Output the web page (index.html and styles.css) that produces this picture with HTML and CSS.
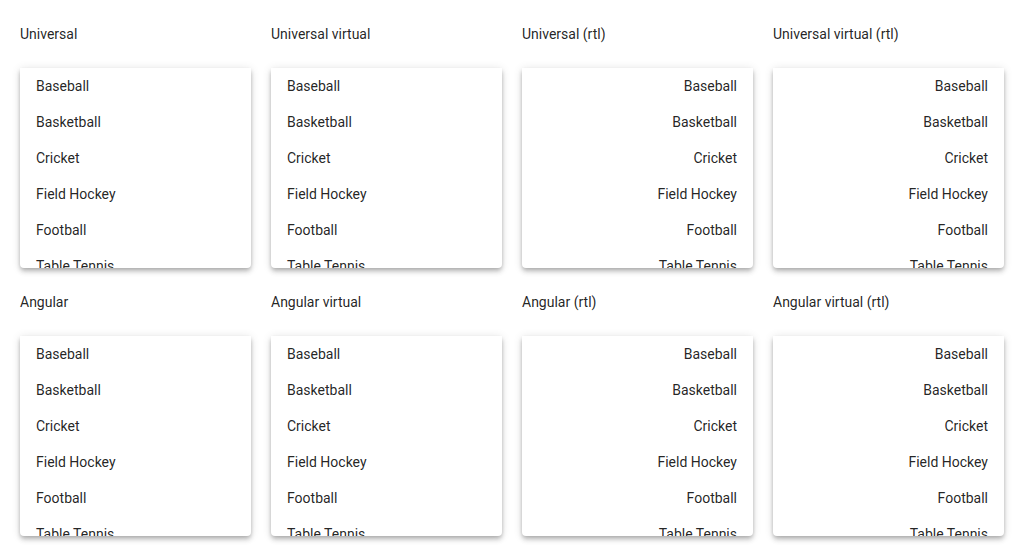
FILE: index.html
```html
<!DOCTYPE html>
<html lang="en">
<head>
  <meta charset="UTF-8">
  <meta name="viewport" content="width=device-width, initial-scale=1.0">
  <title>Autocomplete panels</title>
  <link rel="stylesheet" href="styles.css">
</head>
<body>
  <div class="demos">
    <section class="demo">
      <h3 class="demo-title">Universal</h3>
      <ul class="panel">
        <li>Baseball</li><li>Basketball</li><li>Cricket</li><li>Field Hockey</li><li>Football</li><li>Table Tennis</li><li>Tennis</li><li>Volleyball</li>
      </ul>
    </section>
    <section class="demo">
      <h3 class="demo-title">Universal virtual</h3>
      <ul class="panel">
        <li>Baseball</li><li>Basketball</li><li>Cricket</li><li>Field Hockey</li><li>Football</li><li>Table Tennis</li><li>Tennis</li><li>Volleyball</li>
      </ul>
    </section>
    <section class="demo">
      <h3 class="demo-title">Universal (rtl)</h3>
      <ul class="panel rtl" dir="rtl">
        <li>Baseball</li><li>Basketball</li><li>Cricket</li><li>Field Hockey</li><li>Football</li><li>Table Tennis</li><li>Tennis</li><li>Volleyball</li>
      </ul>
    </section>
    <section class="demo">
      <h3 class="demo-title">Universal virtual (rtl)</h3>
      <ul class="panel rtl" dir="rtl">
        <li>Baseball</li><li>Basketball</li><li>Cricket</li><li>Field Hockey</li><li>Football</li><li>Table Tennis</li><li>Tennis</li><li>Volleyball</li>
      </ul>
    </section>
    <section class="demo">
      <h3 class="demo-title">Angular</h3>
      <ul class="panel">
        <li>Baseball</li><li>Basketball</li><li>Cricket</li><li>Field Hockey</li><li>Football</li><li>Table Tennis</li><li>Tennis</li><li>Volleyball</li>
      </ul>
    </section>
    <section class="demo">
      <h3 class="demo-title">Angular virtual</h3>
      <ul class="panel">
        <li>Baseball</li><li>Basketball</li><li>Cricket</li><li>Field Hockey</li><li>Football</li><li>Table Tennis</li><li>Tennis</li><li>Volleyball</li>
      </ul>
    </section>
    <section class="demo">
      <h3 class="demo-title">Angular (rtl)</h3>
      <ul class="panel rtl" dir="rtl">
        <li>Baseball</li><li>Basketball</li><li>Cricket</li><li>Field Hockey</li><li>Football</li><li>Table Tennis</li><li>Tennis</li><li>Volleyball</li>
      </ul>
    </section>
    <section class="demo">
      <h3 class="demo-title">Angular virtual (rtl)</h3>
      <ul class="panel rtl" dir="rtl">
        <li>Baseball</li><li>Basketball</li><li>Cricket</li><li>Field Hockey</li><li>Football</li><li>Table Tennis</li><li>Tennis</li><li>Volleyball</li>
      </ul>
    </section>
  </div>
</body>
</html>
```

FILE: styles.css
```css
* {
  box-sizing: border-box;
}
body {
  margin: 0;
  padding: 24px 20px;
  background: #fff;
  font-family: Roboto, "Liberation Sans", sans-serif;
  font-size: 14px;
  color: rgba(0, 0, 0, 0.87);
}
.demos {
  display: grid;
  grid-template-columns: repeat(4, 1fr);
  gap: 24px 20px;
}
.demo-title {
  margin: 0 0 24px;
  font-size: 14px;
  font-weight: 400;
  line-height: 20px;
}
.panel {
  list-style: none;
  margin: 0;
  padding: 0;
  height: 200px;
  overflow: hidden;
  background: #fff;
  border-radius: 0 0 4px 4px;
  box-shadow: 0 2px 4px -1px rgba(0, 0, 0, 0.2),
              0 4px 5px 0 rgba(0, 0, 0, 0.14),
              0 1px 10px 0 rgba(0, 0, 0, 0.12);
}
.panel li {
  height: 36px;
  line-height: 36px;
  padding: 0 16px;
  white-space: nowrap;
}
.rtl {
  text-align: right;
}
```
